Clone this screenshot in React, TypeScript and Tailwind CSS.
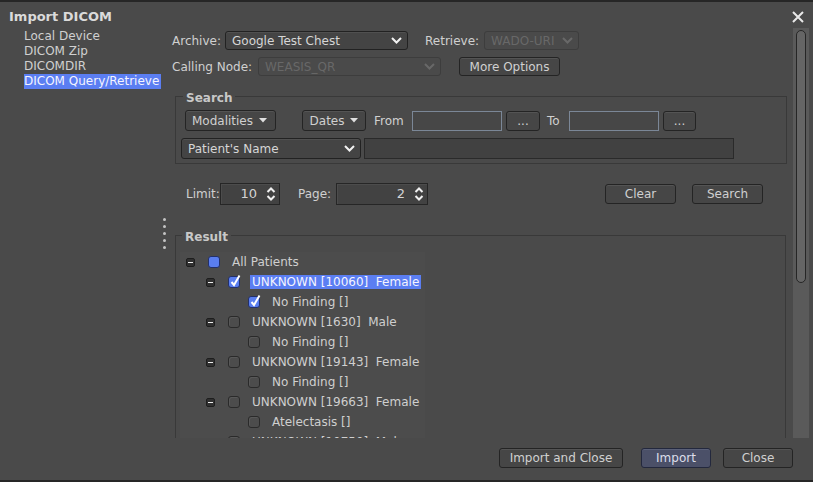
import React from "react";

const Chevron = ({ disabled }: { disabled?: boolean }) => (
  <svg width="11" height="7" viewBox="0 0 11 7">
    <polyline
      points="1,1 5.5,5.5 10,1"
      fill="none"
      stroke={disabled ? "#686868" : "#f2f2f2"}
      strokeWidth="2"
    />
  </svg>
);

const Tri = () => (
  <svg width="8" height="5" viewBox="0 0 8 5">
    <polygon points="0,0 8,0 4,4.5" fill="#e0e0e0" />
  </svg>
);

const UpDown = () => (
  <svg width="10" height="16" viewBox="0 0 10 16">
    <polyline points="1.5,6 5,2.5 8.5,6" fill="none" stroke="#f0f0f0" strokeWidth="2" />
    <polyline points="1.5,10 5,13.5 8.5,10" fill="none" stroke="#f0f0f0" strokeWidth="2" />
  </svg>
);

function Select({ text, className, disabled }: { text: string; className: string; disabled?: boolean }) {
  return (
    <div
      className={
        "flex items-center justify-between rounded-[3px] border pl-[6px] pr-[5px] " +
        (disabled
          ? "border-[#3d3d3d] bg-[#4a4a4a] text-[#686868] "
          : "border-[#222222] bg-[#444444] text-[#d6d6d6] shadow-[inset_0_1px_0_#505050] ") +
        className
      }
    >
      <span>{text}</span>
      <Chevron disabled={disabled} />
    </div>
  );
}

function Btn({ children, className }: { children: React.ReactNode; className: string }) {
  return (
    <div
      className={
        "flex items-center justify-center rounded-[3px] border border-[#242424] bg-[#464646] text-[#d0d0d0] shadow-[inset_0_1px_0_#545454] " +
        className
      }
    >
      {children}
    </div>
  );
}

function Spinner({ value, className }: { value: string; className: string }) {
  return (
    <div
      className={
        "flex items-center justify-end gap-[9px] border border-[#262626] bg-[#424242] pr-[3px] shadow-[inset_1px_1px_0_#4c4c4c] " +
        className
      }
    >
      <span className="text-[13px] text-[#d4d4d4]">{value}</span>
      <UpDown />
    </div>
  );
}

function Box({ state }: { state: "off" | "on" | "full" }) {
  if (state === "off")
    return (
      <div className="h-[12px] w-[12px] rounded-[3px] border border-[#2a2a2a] bg-[#4c4c4c] shadow-[inset_1px_1px_0_#585858]" />
    );
  if (state === "full")
    return <div className="h-[12px] w-[12px] rounded-[3px] border border-[#23306a] bg-[#5a7ef0]" />;
  return (
    <div className="relative h-[12px] w-[12px] rounded-[3px] border border-[#23306a] bg-[#5a7ef0]">
      <svg className="absolute left-[0px] top-[-3px]" width="13" height="14" viewBox="0 0 13 14">
        <path d="M2.5 8 L5 11 L10.5 1.5" fill="none" stroke="#ffffff" strokeWidth="2" />
      </svg>
    </div>
  );
}

const pads = ["pl-[6px]", "pl-[26px]", "pl-[46px]"];

const rows: { level: number; text: string; exp: boolean; box: "off" | "on" | "full"; sel?: boolean }[] = [
  { level: 0, text: "All Patients", exp: true, box: "full" },
  { level: 1, text: "UNKNOWN [10060]  Female", exp: true, box: "on", sel: true },
  { level: 2, text: "No Finding []", exp: false, box: "on" },
  { level: 1, text: "UNKNOWN [1630]  Male", exp: true, box: "off" },
  { level: 2, text: "No Finding []", exp: false, box: "off" },
  { level: 1, text: "UNKNOWN [19143]  Female", exp: true, box: "off" },
  { level: 2, text: "No Finding []", exp: false, box: "off" },
  { level: 1, text: "UNKNOWN [19663]  Female", exp: true, box: "off" },
  { level: 2, text: "Atelectasis []", exp: false, box: "off" },
  { level: 1, text: "UNKNOWN [10750]  Male", exp: true, box: "off" },
];

export default function App() {
  return (
    <div className="flex h-[482px] w-[813px] flex-col overflow-hidden border-y-2 border-[#262626] bg-[#4a4a4a] font-['DejaVu_Sans',sans-serif] text-[12px] text-[#d0d0d0]">
      {/* title */}
      <div className="flex h-[26px] items-center justify-between pl-[9px] pr-[9px]">
        <span className="mt-[4px] text-[13px] font-bold text-[#dadada]">Import DICOM</span>
        <svg width="12" height="12" viewBox="0 0 12 12" className="mt-[3px]">
          <path d="M1 1 L11 11 M11 1 L1 11" stroke="#e8e8e8" strokeWidth="2" />
        </svg>
      </div>

      {/* body */}
      <div className="flex h-[410px] pr-[4px]">
        <div className="w-[160px] pt-[1px] leading-[15px]">
          <div className="ml-[24px] w-[137px]">Local Device</div>
          <div className="ml-[24px] w-[137px]">DICOM Zip</div>
          <div className="ml-[24px] w-[137px]">DICOMDIR</div>
          <div className="ml-[24px] w-[137px] bg-[#5b7ef2] text-[#f4f4ff]">DICOM Query/Retrieve</div>
        </div>

        <div className="flex w-[8px] flex-col items-center justify-center gap-[4px] pt-[1px]">
          <div className="h-[3px] w-[3px] rounded-full bg-[#c4c4c4]" />
          <div className="h-[3px] w-[3px] rounded-full bg-[#c4c4c4]" />
          <div className="h-[3px] w-[3px] rounded-full bg-[#c4c4c4]" />
          <div className="h-[3px] w-[3px] rounded-full bg-[#c4c4c4]" />
          <div className="h-[3px] w-[3px] rounded-full bg-[#c4c4c4]" />
        </div>

        <div className="h-[410px] w-[625px] overflow-hidden">
          {/* archive row */}
          <div className="mt-[3px] flex h-[19px] items-center pl-[4px]">
            <span className="w-[53px]">Archive:</span>
            <Select text="Google Test Chest" className="h-[19px] w-[183px]" />
            <span className="ml-[17px] w-[59px]">Retrieve:</span>
            <Select text="WADO-URI" className="h-[19px] w-[95px]" disabled />
          </div>
          <div className="mt-[7px] flex h-[19px] items-center pl-[4px]">
            <span className="w-[86px]">Calling Node:</span>
            <Select text="WEASIS_QR" className="h-[19px] w-[183px]" disabled />
            <Btn className="ml-[18px] h-[19px] w-[101px]">More Options</Btn>
          </div>

          {/* search */}
          <fieldset className="ml-[7px] mt-[12px] w-[612px] border border-[#393939] px-[5px] pb-[4px] pt-[6px]">
            <legend className="ml-[2px] px-[3px] pt-[4px] font-bold leading-[12px] text-[#c8c8c8]">Search</legend>
            <div className="flex h-[21px] items-center pl-[4px]">
              <Btn className="h-[21px] w-[91px] gap-[6px] pr-[2px]">
                <span>Modalities</span>
                <Tri />
              </Btn>
              <Btn className="ml-[26px] h-[21px] w-[64px] gap-[6px]">
                <span>Dates</span>
                <Tri />
              </Btn>
              <span className="ml-[8px] w-[38px]">From</span>
              <div className="h-[20px] w-[90px] border border-[#7b8797] bg-[#474747]" />
              <Btn className="ml-[4px] h-[20px] w-[34px] text-[#b8c8d8]">...</Btn>
              <span className="ml-[7px] w-[22px]">To</span>
              <div className="h-[20px] w-[90px] border border-[#7b8797] bg-[#474747]" />
              <Btn className="ml-[4px] h-[20px] w-[33px] text-[#b8c8d8]">...</Btn>
            </div>
            <div className="mt-[7px] flex h-[21px] items-center">
              <Select text="Patient's Name" className="h-[21px] w-[180px]" />
              <div className="ml-[3px] h-[21px] w-[370px] border border-[#2a2a2a] bg-[#414141]" />
            </div>
          </fieldset>

          {/* limit row */}
          <div className="mt-[19px] flex h-[22px] items-center pl-[18px]">
            <span className="w-[34px]">Limit:</span>
            <Spinner value="10" className="h-[22px] w-[60px]" />
            <span className="ml-[18px] w-[38px]">Page:</span>
            <Spinner value="2" className="h-[22px] w-[92px]" />
            <Btn className="ml-[177px] h-[20px] w-[71px]">Clear</Btn>
            <Btn className="ml-[16px] h-[20px] w-[71px]">Search</Btn>
          </div>

          {/* result */}
          <fieldset className="ml-[7px] mt-[22px] w-[611px] border border-[#393939] pl-[4px] pt-[9px]">
            <legend className="ml-[2px] px-[3px] pt-[4px] font-bold leading-[12px] text-[#c8c8c8]">Result</legend>
            <div className="w-[245px] bg-[#4c4c4c]">
              {rows.map((r, i) => (
                <div key={i} className={"flex h-[20px] items-center " + pads[r.level]}>
                  <div className="flex h-[9px] w-[9px] items-center justify-center">
                    {r.exp && (
                      <div className="flex h-[9px] w-[9px] items-center justify-center rounded-[2px] border border-[#1e1e1e] bg-[#303030]">
                        <div className="h-[1px] w-[5px] bg-[#eeeeee]" />
                      </div>
                    )}
                  </div>
                  <div className="ml-[13px]">
                    <Box state={r.box} />
                  </div>
                  <span
                    className={
                      "ml-[10px] whitespace-pre px-[2px] leading-[14px] " +
                      (r.sel ? "bg-[#5b7ef2] text-[#f4f4ff]" : "text-[#cfcfcf]")
                    }
                  >
                    {r.text}
                  </span>
                </div>
              ))}
            </div>
          </fieldset>
        </div>

        {/* scrollbar */}
        <div className="flex h-[410px] w-[16px] justify-center bg-[#5a5a5a] pt-[2px]">
          <div className="h-[253px] w-[10px] rounded-full border border-[#262626] bg-[#656565]" />
        </div>
      </div>

      {/* bottom */}
      <div className="flex h-[42px] items-start justify-end pr-[20px] pt-[10px]">
        <Btn className="h-[20px] w-[124px]">Import and Close</Btn>
        <div className="ml-[18px] flex h-[20px] w-[70px] items-center justify-center rounded-[3px] border border-[#23283d] bg-[#4b5068] text-[#dcdeea] shadow-[inset_0_1px_0_#5a6078]">
          Import
        </div>
        <Btn className="ml-[12px] h-[20px] w-[70px]">Close</Btn>
      </div>
    </div>
  );
}
